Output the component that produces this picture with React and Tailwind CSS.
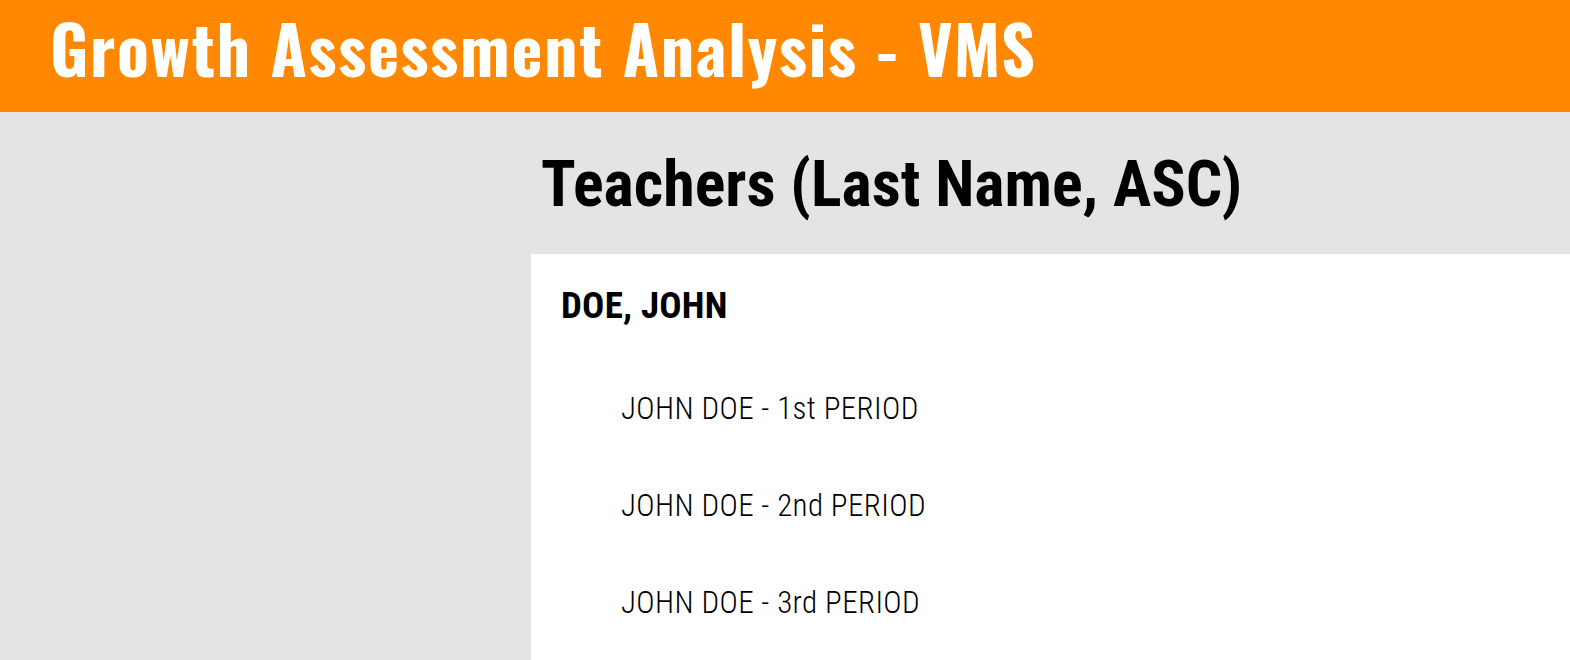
const periods = ["1st", "2nd", "3rd"]

export default function App() {
    return (
        <div className="min-h-[660px] bg-[#e4e4e4] flex flex-col">
            <header className="h-[112px] bg-[#ff8800] px-[50px] pt-[14px]">
                <h1 className="text-white text-[66px] leading-none font-bold tracking-[1.7px] font-['Oswald','Roboto_Condensed','Roboto',sans-serif]">
                    Growth Assessment Analysis - VMS
                </h1>
            </header>
            <div className="flex flex-1">
                <aside className="w-[531px] shrink-0" />
                <main className="flex-1 flex flex-col font-['Roboto_Condensed','Roboto',sans-serif] text-black">
                    <h2 className="h-[142px] pl-[10px] pt-[41px] text-[64px] leading-none font-bold">
                        Teachers (Last Name, ASC)
                    </h2>
                    <section className="flex-1 bg-white pt-[33px] px-[30px]">
                        <h3 className="text-[37px] font-bold leading-none tracking-[0.2px]">DOE, JOHN</h3>
                        <ul className="mt-[69px] pl-[60px] flex flex-col gap-[66px]">
                            {periods.map((p) => (
                                <li key={p} className="text-[31px] font-light leading-none tracking-[0.4px]">
                                    JOHN DOE - {p} PERIOD
                                </li>
                            ))}
                        </ul>
                    </section>
                </main>
            </div>
        </div>
    )
}
